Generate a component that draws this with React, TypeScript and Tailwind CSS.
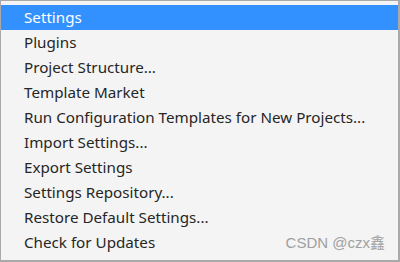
import React from "react";

const items = [
  "Settings",
  "Plugins",
  "Project Structure...",
  "Template Market",
  "Run Configuration Templates for New Projects...",
  "Import Settings...",
  "Export Settings",
  "Settings Repository...",
  "Restore Default Settings...",
  "Check for Updates",
];

export default function App() {
  return (
    <div className="w-[400px] h-[262px] bg-[#f4f4f4] border-l border-t border-r-2 border-b-2 border-[#a9a9a9] relative overflow-hidden">
      <div className="pt-[4px] flex flex-col">
        {items.map((t, i) => (
          <div
            key={t}
            className={
              i === 0
                ? "h-[25px] flex items-center pl-[23px] bg-[#3391ff] text-white text-[15.2px] font-['Noto_Sans',sans-serif]"
                : "h-[25px] flex items-center pl-[23px] text-[#262626] text-[15.2px] font-['Noto_Sans',sans-serif]"
            }
          >
            {t}
          </div>
        ))}
      </div>
      <div className="absolute right-[13px] bottom-[6px] text-[15px] text-[#a0a0a0] font-['Liberation_Sans','Noto_Sans_CJK_SC',sans-serif]">
        CSDN @czx鑫
      </div>
    </div>
  );
}
